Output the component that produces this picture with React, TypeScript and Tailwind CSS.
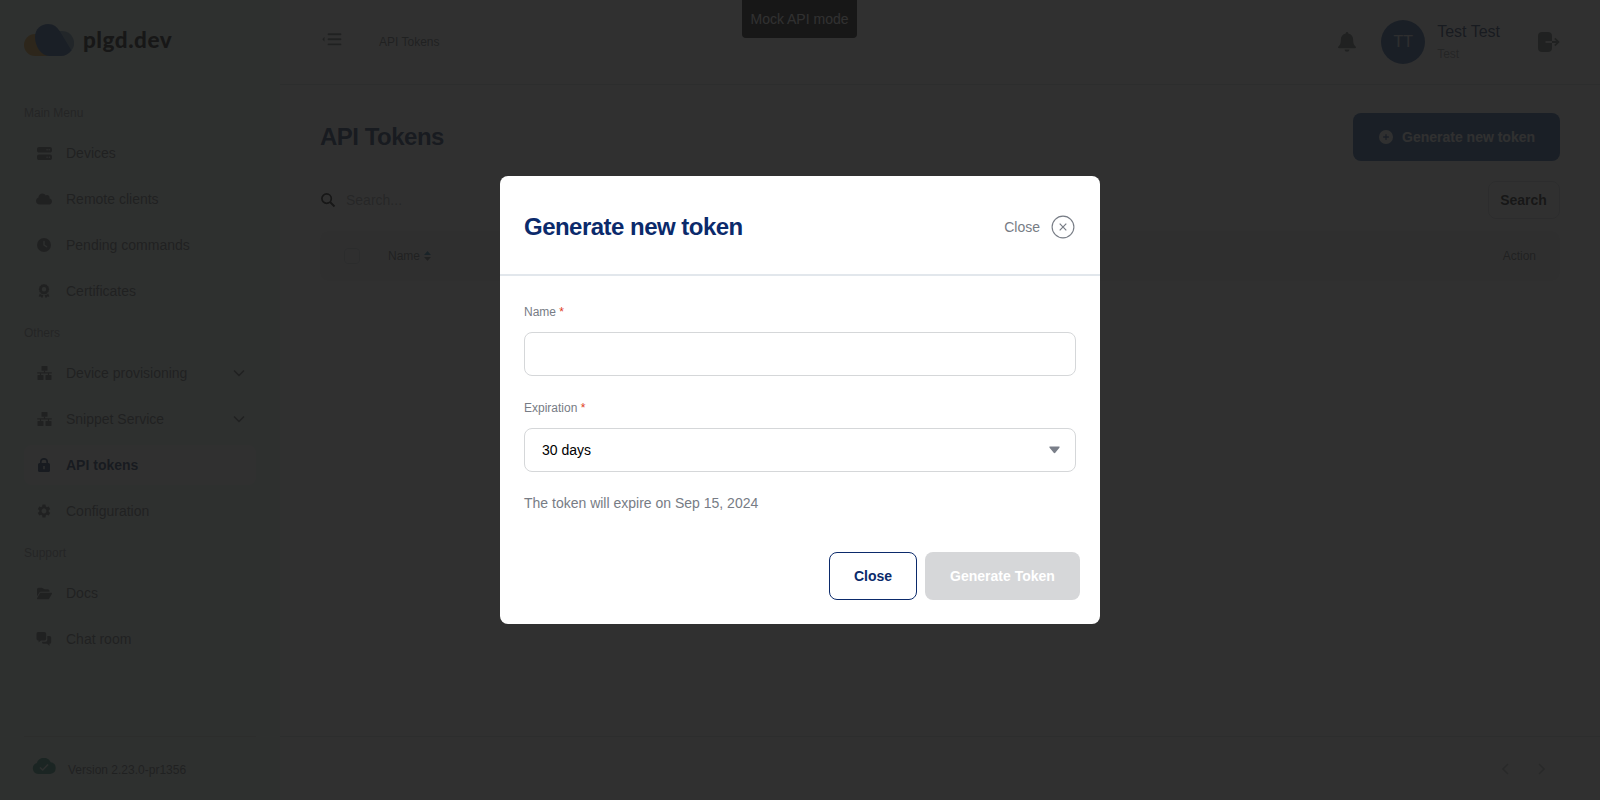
import type { ReactNode } from 'react'
import { FaAward, FaCirclePlus, FaClock, FaCloud, FaFolderOpen, FaServer } from 'react-icons/fa6'
import { MdSettings } from 'react-icons/md'

function Logo() {
  return (
    <svg width="50" height="32" viewBox="0 0 50 32" className="block">
      <path d="M11 10H24V32H11A11 11 0 0 1 11 10Z" fill="#d99a2b" />
      <path d="M30 7H38A12 12 0 0 1 47 27L40 20Z" fill="#6d9dbb" />
      <path d="M24 0C30 0 33 3 36 7.500L47.500 26.500C45 30 41 32 37 32H25C17 32 11 22 11 13C11 5 17 0 24 0Z" fill="#22529a" />
    </svg>
  )
}

function LockIcon() {
  return (
    <svg width="14" height="14" viewBox="0 0 14 14" fill="none">
      <path d="M3.800 6V4A3.200 3.200 0 0 1 10.200 4V6" stroke="currentColor" strokeWidth="1.700" />
      <path fillRule="evenodd" d="M2.500 5H11.500A1.500 1.500 0 0 1 13 6.500V12.500A1.500 1.500 0 0 1 11.500 14H2.500A1.500 1.500 0 0 1 1 12.500V6.500A1.500 1.500 0 0 1 2.500 5ZM6.300 8V11.200H7.700V8Z" fill="currentColor" />
    </svg>
  )
}

function NetworkIcon() {
  return (
    <svg width="15" height="14" viewBox="0 0 15 14" fill="currentColor">
      <rect x="4.500" width="6" height="4.800" rx=".6" />
      <rect x=".5" y="9" width="6" height="5" rx=".6" />
      <rect x="8.500" y="9" width="6" height="5" rx=".6" />
      <path d="M6.900 4.500H8.100V6.200H14.800V7.400H12.100V9.200H10.900V7.400H4.100V9.200H2.900V7.400H.2V6.200H6.900Z" />
    </svg>
  )
}

function ChatIcon() {
  return (
    <svg width="16" height="14" viewBox="0 0 16 14" fill="currentColor">
      <path d="M2 0H8.500A1.700 1.700 0 0 1 10.200 1.700V6.800A1.700 1.700 0 0 1 8.500 8.500H5L2.600 10.600V8.500H2A1.700 1.700 0 0 1 .5 6.800V1.700A1.700 1.700 0 0 1 2 0Z" />
      <path d="M11.300 4H13.500A1.600 1.600 0 0 1 15.200 5.600V10.200A1.600 1.600 0 0 1 13.500 11.800V14L11 11.800H7.500A1.600 1.600 0 0 1 6 10.200V9.700H9.500A1.800 1.800 0 0 0 11.300 7.900Z" />
    </svg>
  )
}

function Chevron() {
  return (
    <svg width="12" height="7" viewBox="0 0 12 7" fill="none" stroke="currentColor" strokeWidth="1.700" strokeLinecap="round" strokeLinejoin="round">
      <path d="M1.500 1L6 5.500L10.500 1" />
    </svg>
  )
}

type ItemProps = { icon: ReactNode; label: string; active?: boolean; expandable?: boolean }

function MenuItem({ icon, label, active, expandable }: ItemProps) {
  const state = active ? 'bg-white font-bold text-[#0b2a5b]' : 'text-[#62676c]'
  return (
    <div className={`mb-1.5 flex h-10 items-center rounded-lg pl-3 pr-[11px] text-sm ${state}`}>
      <span className="mr-3.5 flex w-4 justify-center">{icon}</span>
      <span className="grow">{label}</span>
      {expandable && <Chevron />}
    </div>
  )
}

function MenuLabel({ children }: { children: ReactNode }) {
  return <div className="pb-2.5 pt-1.5 text-xs leading-5 text-[#888d92]">{children}</div>
}

function Sidebar() {
  return (
    <aside className="flex w-70 shrink-0 flex-col bg-[#e8faf0] px-6">
      <div className="flex h-[97px] items-start gap-[9px] pt-6">
        <Logo />
        <span className="font-['Lato'] text-[22.5px] font-black leading-[31px] tracking-[0.5px] text-black">plgd.dev</span>
      </div>
      <nav className="grow">
        <MenuLabel>Main Menu</MenuLabel>
        <MenuItem icon={<FaServer size={15} />} label="Devices" />
        <MenuItem icon={<FaCloud size={16} />} label="Remote clients" />
        <MenuItem icon={<FaClock size={14} />} label="Pending commands" />
        <MenuItem icon={<FaAward size={14} />} label="Certificates" />
        <MenuLabel>Others</MenuLabel>
        <MenuItem icon={<NetworkIcon />} label="Device provisioning" expandable />
        <MenuItem icon={<NetworkIcon />} label="Snippet Service" expandable />
        <MenuItem icon={<LockIcon />} label="API tokens" active />
        <MenuItem icon={<MdSettings size={16} />} label="Configuration" />
        <MenuLabel>Support</MenuLabel>
        <MenuItem icon={<FaFolderOpen size={15} />} label="Docs" />
        <MenuItem icon={<ChatIcon />} label="Chat room" />
      </nav>
      <div className="flex h-16 gap-3 border-t border-[#d3dcd8] pl-2 text-xs text-[#62676c]">
        <svg width="24" height="16" viewBox="0 0 24 16" className="mt-[21px]">
          <path d="M6 16A5.700 5.700 0 0 1 4.800 4.900A7.500 7.500 0 0 1 18.800 4.300A5.900 5.900 0 0 1 18.300 16Z" fill="#30907c" />
          <path d="M8 9.500L10.700 12L16 6.500" fill="none" stroke="#dff0ea" strokeWidth="1.500" />
        </svg>
        <span className="pt-[25px]">Version 2.23.0-pr1356</span>
      </div>
    </aside>
  )
}

function TopBar() {
  return (
    <header className="flex h-[85px] shrink-0 items-center border-b border-[#d5d9dd] pl-[42px] pr-10">
      <svg width="20" height="13" viewBox="0 0 20 13" className="mb-1.5 mr-[37px] text-[#62676c]" fill="none" stroke="currentColor" strokeWidth="1.900" strokeLinecap="round">
        <path d="M6.500 1.200H18.500M6.500 6.300H18.500M6.500 11.400H18.500" />
        <path d="M2.500 3.800V8.800L.3 6.300Z" fill="currentColor" stroke="none" />
      </svg>
      <span className="grow text-xs text-[#62676c]">API Tokens</span>
      <svg width="18" height="20" viewBox="0 0 18 20" fill="#5d6864">
        <path d="M9 0A1.400 1.400 0 0 1 10.300 1.500C13.500 2.200 15.200 4.500 15.200 7.800C15.200 12 16.300 13.200 17.700 14.700C18.300 15.500 18 16.300 17 16.300H1C0 16.300-.3 15.500 .3 14.700C1.700 13.200 2.800 12 2.800 7.800C2.800 4.500 4.500 2.200 7.700 1.500A1.400 1.400 0 0 1 9 0ZM6.500 17.500H11.500A2.500 2.300 0 0 1 6.500 17.500Z" />
      </svg>
      <span className="ml-[25px] flex size-11 items-center justify-center rounded-full bg-[#225298] text-base text-[#e4eaf0]">TT</span>
      <div className="ml-3 mr-[38px]">
        <div className="pb-0.5 pt-0.5 text-base leading-5 text-[#0b2a5b]">Test Test</div>
        <div className="text-xs leading-5 text-[#888c91]">Test</div>
      </div>
      <svg width="22" height="20" viewBox="0 0 22 20">
        <rect width="14" height="20" rx="4" fill="#5d6864" />
        <path d="M7.500 10H14" stroke="#f5f5f5" strokeWidth="1.800" />
        <path d="M14 10H20M16.800 6.300L20.500 10L16.800 13.700" fill="none" stroke="#5d6864" strokeWidth="1.800" />
      </svg>
    </header>
  )
}

function Content() {
  return (
    <main className="flex grow flex-col px-10 pt-7">
      <div className="flex items-center justify-between">
        <h1 className="text-2xl font-bold tracking-[-0.5px] text-[#0b2a5b]">API Tokens</h1>
        <button className="flex h-12 w-[207px] items-center rounded-lg bg-[#225298] pl-[26px] text-sm font-bold text-white">
          <FaCirclePlus size={14} className="mr-[9px]" />
          Generate new token
        </button>
      </div>
      <div className="mt-5 flex h-[38px] items-center">
        <svg width="15" height="15" viewBox="0 0 15 15" fill="none" stroke="black" strokeWidth="1.700" className="mr-2.5 ml-px">
          <circle cx="5.600" cy="5.600" r="4.700" />
          <path d="M9 9L13.500 13.500" strokeWidth="2" />
        </svg>
        <span className="grow text-sm text-[#999da2]">Search...</span>
        <button className="h-[38px] w-[72px] rounded-lg border border-[#d3d7db] pr-px text-sm font-bold text-black">Search</button>
      </div>
      <div className="mt-3 flex h-[50px] items-center rounded-lg bg-[#f5f5f5] px-6 text-xs text-[#62676c]">
        <span className="mr-[27px] size-4 shrink-0 rounded-sm border border-[#cdd1d6]" />
        <span className="ml-px">Name</span>
        <svg width="7" height="10" viewBox="0 0 7 10" className="ml-1">
          <path d="M0 4L3.500 0L7 4Z" fill="#1b7aa8" />
          <path d="M0 6L3.500 10L7 6Z" fill="#62676c" />
        </svg>
        <span className="ml-auto">Action</span>
      </div>
    </main>
  )
}

function Pager() {
  return (
    <footer className="flex h-16 shrink-0 items-center justify-end gap-[29px] border-t border-[#d5d9dd] pr-[55px] text-[#b0b4b9]">
      <svg width="7" height="12" viewBox="0 0 7 12" fill="none" stroke="currentColor" strokeWidth="1.600">
        <path d="M6 1L1 6L6 11" />
      </svg>
      <svg width="7" height="12" viewBox="0 0 7 12" fill="none" stroke="currentColor" strokeWidth="1.600">
        <path d="M1 1L6 6L1 11" />
      </svg>
    </footer>
  )
}

function FieldLabel({ children }: { children: ReactNode }) {
  return (
    <div className="mb-3 text-xs leading-4 text-[#777c85]">
      {children} <span className="text-[#e03c22]">*</span>
    </div>
  )
}

function TokenDialog() {
  return (
    <div className="flex h-[448px] w-[600px] flex-col rounded-lg bg-white">
      <div className="flex h-[100px] shrink-0 items-center border-b-2 border-[#e2e7ec] px-6 pt-1">
        <h2 className="grow text-2xl font-bold tracking-[-0.52px] text-[#0b2a6b]">Generate new token</h2>
        <span className="text-sm text-[#777c85]">Close</span>
        <svg width="24" height="24" viewBox="0 0 24 24" fill="none" stroke="#777c85" className="ml-[11px] mr-px">
          <circle cx="12" cy="12" r="10.900" strokeWidth="1.100" />
          <path d="M8.700 8.700L15.300 15.300M15.300 8.700L8.700 15.300" strokeWidth="1.200" />
        </svg>
      </div>
      <div className="px-6 pt-7">
        <FieldLabel>Name</FieldLabel>
        <div className="mb-6 h-11 rounded-lg border border-[#d5d7d9]" />
        <FieldLabel>Expiration</FieldLabel>
        <div className="flex h-11 items-center justify-between rounded-lg border border-[#d5d7d9] pl-[17px] pr-[15px] text-sm text-black">
          30 days
          <svg width="11" height="8" viewBox="0 0 11 8">
            <path d="M1 .5H10C10.700 .5 10.800 1.200 10.400 1.700L6.500 6.600C5.900 7.300 5.100 7.300 4.500 6.600L.6 1.700C.2 1.200 .3 .5 1 .5Z" fill="#7a7f89" />
          </svg>
        </div>
        <p className="mt-[21px] text-sm text-[#777c85]">The token will expire on Sep 15, 2024</p>
      </div>
      <div className="mt-auto flex justify-end gap-2 pb-6 pr-5 text-sm font-bold">
        <button className="h-12 w-[88px] rounded-lg border border-[#0b2a6b] text-[#0b2a6b]">Close</button>
        <button className="h-12 w-[155px] rounded-lg bg-[#d6d7d9] text-white">Generate Token</button>
      </div>
    </div>
  )
}

export default function App() {
  return (
    <div className="relative flex h-[800px] w-[1600px] overflow-hidden bg-white font-['Liberation_Sans',Arial,sans-serif]">
      <Sidebar />
      <div className="flex grow flex-col">
        <TopBar />
        <Content />
        <Pager />
      </div>
      <div className="absolute left-[742px] top-0 flex h-[38px] w-[115px] items-center justify-center rounded-b bg-black text-sm text-white">
        Mock API mode
      </div>
      <div className="absolute inset-0 flex items-center justify-center bg-[#191919]/90">
        <TokenDialog />
      </div>
    </div>
  )
}
